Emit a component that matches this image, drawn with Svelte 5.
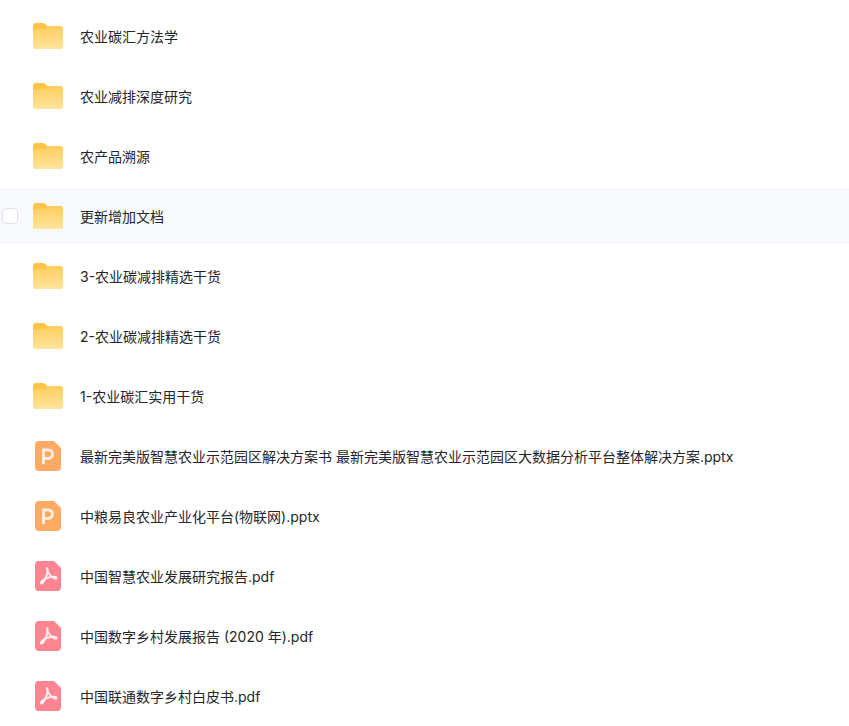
<script>
  const rows = [
    { type: "folder", name: "农业碳汇方法学" },
    { type: "folder", name: "农业减排深度研究" },
    { type: "folder", name: "农产品溯源" },
    { type: "folder", name: "更新增加文档", hover: true },
    { type: "folder", name: "3-农业碳减排精选干货" },
    { type: "folder", name: "2-农业碳减排精选干货" },
    { type: "folder", name: "1-农业碳汇实用干货" },
    { type: "ppt", name: "最新完美版智慧农业示范园区解决方案书 最新完美版智慧农业示范园区大数据分析平台整体解决方案.pptx" },
    { type: "ppt", name: "中粮易良农业产业化平台(物联网).pptx" },
    { type: "pdf", name: "中国智慧农业发展研究报告.pdf" },
    { type: "pdf", name: "中国数字乡村发展报告 (2020 年).pdf" },
    { type: "pdf", name: "中国联通数字乡村白皮书.pdf" }
  ];
</script>

<main class="list">
  {#each rows as row}
    <div class="row" class:hover={row.hover}>
      {#if row.hover}
        <span class="check"></span>
      {/if}
      <span class="icon">
        {#if row.type === "folder"}
          <svg width="30" height="26" viewBox="0 0 30 26">
            <defs>
              <linearGradient id="fold" x1="0" y1="0" x2="0" y2="1">
                <stop offset="0" stop-color="#ffcd5c" />
                <stop offset="1" stop-color="#ffe59e" />
              </linearGradient>
            </defs>
            <path d="M3 0h7c1 0 1.700.4 2.300 1l2.300 2.300H27a3 3 0 0 1 3 3V23a3 3 0 0 1-3 3H3a3 3 0 0 1-3-3V3a3 3 0 0 1 3-3z" fill="#ffc445" />
            <path d="M0 8.500C0 7 1 6 2.500 6h8c1.500 0 2.400-.5 3.300-1.300l1.400-1.400H27a3 3 0 0 1 3 3V23a3 3 0 0 1-3 3H3a3 3 0 0 1-3-3z" fill="url(#fold)" />
          </svg>
        {:else if row.type === "ppt"}
          <svg width="26" height="30" viewBox="0 0 26 30">
            <path d="M4 0h15l7 7v19a4 4 0 0 1-4 4H4a4 4 0 0 1-4-4V4a4 4 0 0 1 4-4z" fill="#ffab66" />
            <path d="M8.500 23V8.800h4.700a4.300 4.300 0 0 1 0 8.600H8.500" fill="none" stroke="#fff0e3" stroke-width="2.800" />
          </svg>
        {:else}
          <svg width="26" height="30" viewBox="0 0 26 30">
            <path d="M4 0h15l7 7v19a4 4 0 0 1-4 4H4a4 4 0 0 1-4-4V4a4 4 0 0 1 4-4z" fill="#ff8691" />
            <path d="M12 7.500c0 3.500 3.500 8 7 9.500 1.800.8 2.800.4 2.600-.4-.3-1-3.500-1.100-7-.4-3.800.8-7.500 3-8.500 5-.6 1.200.5 1.700 1.500.8 2.500-2.200 5-9.500 5-13 0-1.700-.6-2.200-.6-1.500z" fill="none" stroke="#ffeef0" stroke-width="2" stroke-linejoin="round" />
          </svg>
        {/if}
      </span>
      <span class="name">{row.name}</span>
    </div>
  {/each}
</main>

<style>
  :global(body) {
    margin: 0;
    background: #fff;
    overflow: hidden;
  }

  .list {
    display: flex;
    flex-direction: column;
    gap: 4px;
    padding-top: 8px;
    height: 718px;
    overflow: hidden;
    font-family: "Inter", "Noto Sans CJK SC", sans-serif;
    font-size: 14px;
    color: #25262b;
  }

  .row {
    position: relative;
    flex: none;
    display: flex;
    align-items: center;
    height: 56px;
  }

  .row.hover {
    background: #f7f9fc;
  }

  .check {
    position: absolute;
    left: 2px;
    top: 20px;
    width: 16px;
    height: 16px;
    box-sizing: border-box;
    border: 1px solid #e0e1e8;
    border-radius: 5px;
    background: #fff;
  }

  .icon {
    flex: none;
    width: 32px;
    margin-left: 32px;
    margin-right: 16px;
    display: flex;
    justify-content: center;
  }

  .name {
    white-space: nowrap;
  }
</style>
